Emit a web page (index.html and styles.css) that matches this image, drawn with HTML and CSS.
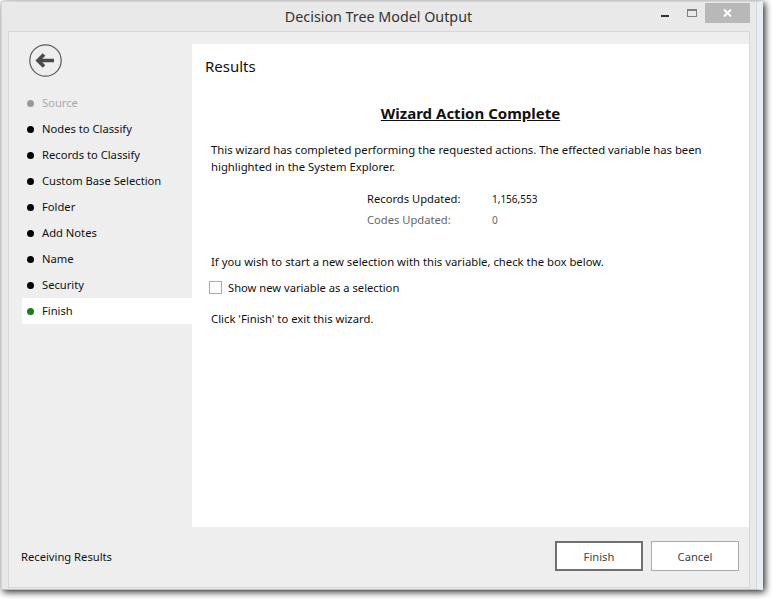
FILE: index.html
```html
<!DOCTYPE html>
<html lang="en">
<head>
	<meta charset="UTF-8">
	<title>Decision Tree Model Output</title>
	<link rel="stylesheet" href="styles.css">
</head>
<body>
	<div class="window">
		<div class="titlebar">
			<div class="title">Decision Tree Model Output</div>
			<div class="controls">
				<span class="ctl-min"></span>
				<span class="ctl-max"></span>
				<span class="ctl-close">
					<svg width="9" height="8" viewBox="0 0 9 8"><path d="M1 0.5L8 7.5M8 0.5L1 7.5" stroke="#fff" stroke-width="2" fill="none"/></svg>
				</span>
			</div>
		</div>
		<div class="frame">
			<div class="main">
				<div class="side">
					<svg class="back" width="33" height="33" viewBox="0 0 33 33">
						<circle cx="16.5" cy="16.5" r="15.7" fill="none" stroke="#5a5a5a" stroke-width="1.2"/>
						<path d="M25 16.5H9M15 10.5L9 16.5L15 22.5" fill="none" stroke="#4a4a4a" stroke-width="3.6"/>
					</svg>
					<ul class="steps">
						<li class="step off">Source</li>
						<li class="step">Nodes to Classify</li>
						<li class="step">Records to Classify</li>
						<li class="step">Custom Base Selection</li>
						<li class="step">Folder</li>
						<li class="step">Add Notes</li>
						<li class="step">Name</li>
						<li class="step">Security</li>
						<li class="step active">Finish</li>
					</ul>
				</div>
				<div class="content">
					<div class="heading">Results</div>
					<div class="done">Wizard Action Complete</div>
					<p class="intro">This wizard has completed performing the requested actions. The effected variable has been highlighted in the System Explorer.</p>
					<div class="stats">
						<div class="stat-row">
							<span class="stat-label">Records Updated:</span>
							<span class="stat-val">1,156,553</span>
						</div>
						<div class="stat-row muted">
							<span class="stat-label">Codes Updated:</span>
							<span class="stat-val">0</span>
						</div>
					</div>
					<p class="hint">If you wish to start a new selection with this variable, check the box below.</p>
					<label class="check"><span class="box"></span>Show new variable as a selection</label>
					<p class="exit">Click 'Finish' to exit this wizard.</p>
				</div>
			</div>
			<div class="footer">
				<div class="status">Receiving Results</div>
				<div class="buttons">
					<button class="btn btn-default">Finish</button>
					<button class="btn">Cancel</button>
				</div>
			</div>
		</div>
	</div>
</body>
</html>
```
FILE: styles.css
```css
*{
	margin: 0;
	padding: 0;
	box-sizing: border-box;
}
ul{
	list-style: none;
}
html,body{
	height: 100%;
	overflow: hidden;
	background-color: #fff;
}
body{
	padding: 1px 0 0 1px;
	font-family: "Noto Sans", "Open Sans", sans-serif;
	font-size: 11.2px;
	color: #111;
}
.window{
	display: flex;
	flex-direction: column;
	width: 762px;
	height: 589px;
	border: 1px solid #ced6e0;
	border-right: 6px solid #e6eef8;
	border-bottom-color: #b8c0c8;
	background-color: #e9e9e9;
	box-shadow: 2px 2px 7px rgba(0,0,0,.85), inset -1px 0 0 #d5d9dd;
}
.titlebar{
	position: relative;
	height: 29px;
	flex: none;
}
.title{
	padding: 4px 2px 0 0;
	text-align: center;
	font-size: 14.3px;
	line-height: 22px;
	color: #333;
}
.controls{
	position: absolute;
	top: 1px;
	right: 7px;
	display: flex;
	align-items: flex-start;
}
.ctl-min{
	width: 8px;
	height: 2px;
	margin-top: 12px;
	margin-right: 18px;
	background-color: #333;
}
.ctl-max{
	width: 10px;
	height: 8px;
	margin-top: 6px;
	margin-right: 8px;
	border: 1px solid #808080;
	border-top-width: 2px;
}
.ctl-close{
	display: flex;
	align-items: center;
	justify-content: center;
	width: 45px;
	height: 20px;
	background-color: #b8b8b8;
}
.frame{
	flex: 1;
	display: flex;
	flex-direction: column;
	margin: 0 7px 1px 6px;
	border: 1px solid #d5d9dd;
	background-color: #eee;
}
.main{
	flex: 1;
	display: flex;
	padding-top: 12px;
}
.side{
	width: 183px;
	flex: none;
}
.back{
	display: block;
	margin: 0 0 13px 20px;
}
.steps{
	margin-left: 13px;
}
.step{
	position: relative;
	height: 26px;
	padding-left: 20px;
	line-height: 26px;
}
.step:before{
	content: "";
	position: absolute;
	left: 5px;
	top: 10px;
	width: 7px;
	height: 7px;
	border-radius: 50%;
	background-color: #000;
}
.step.off{
	color: #aaa;
}
.step.off:before{
	background-color: #999;
}
.step.active{
	background-color: #fff;
}
.step.active:before{
	background-color: #1f7a1f;
}
.content{
	flex: 1;
	padding: 11px 19px 0 13px;
	background-color: #fff;
}
.heading{
	font-size: 15px;
	line-height: 22px;
}
.done{
	margin-top: 25px;
	padding-left: 6px;
	text-align: center;
	font-size: 15px;
	font-weight: 700;
	line-height: 22px;
	text-decoration: underline;
}
.intro{
	margin: 17px 0 0 6px;
	font-size: 11.3px;
	line-height: 17px;
}
.stats{
	margin: 13px 0 0 162px;
}
.stat-row{
	display: flex;
	height: 21px;
	line-height: 21px;
}
.stat-row.muted{
	color: #666;
}
.stat-label{
	width: 125px;
}
.stat-val{
	padding-top: 1px;
	font-size: 10px;
}
.hint{
	margin: 23px 0 0 6px;
	font-size: 11.3px;
	line-height: 17px;
}
.check{
	display: flex;
	align-items: center;
	margin: 9px 0 0 4px;
	line-height: 17px;
}
.box{
	width: 13px;
	height: 13px;
	margin-right: 6px;
	border: 1px solid #aaa;
	background-color: #fff;
}
.exit{
	margin: 14px 0 0 6px;
	font-size: 11.3px;
	line-height: 17px;
}
.footer{
	display: flex;
	align-items: center;
	justify-content: space-between;
	height: 60px;
	flex: none;
	padding: 0 10px 2px 12px;
}
.buttons{
	display: flex;
	gap: 8px;
}
.btn{
	width: 88px;
	height: 30px;
	border: 1px solid #aaa;
	background-color: #fff;
	font-family: inherit;
	font-size: 11.2px;
	color: #444;
}
.btn-default{
	border: 2px solid #707070;
}
```
